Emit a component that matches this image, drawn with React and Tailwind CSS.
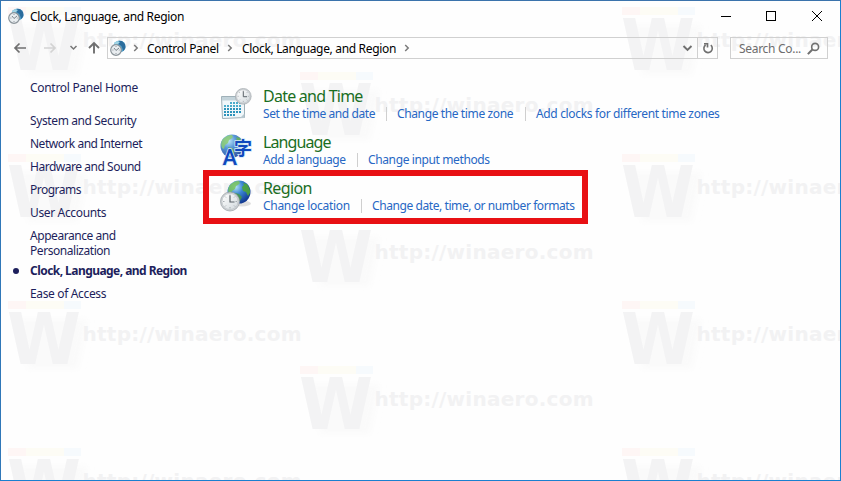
const sidebar = [
  { label: 'System and Security', className: 'tracking-[-0.38px]' },
  { label: 'Network and Internet', className: 'tracking-[-0.5px]' },
  { label: 'Hardware and Sound', className: 'tracking-[-0.47px]' },
  { label: 'Programs', className: 'tracking-[-0.5px]' },
  { label: 'User Accounts', className: 'tracking-[-0.35px]' },
  { label: 'Appearance and Personalization', className: 'w-[110px] tracking-[-0.45px]' },
  { label: 'Clock, Language, and Region', className: '-mt-[3px] font-bold tracking-[-0.55px]', active: true },
  { label: 'Ease of Access', className: 'tracking-[-0.35px]' },
];

const categories = [
  {
    title: 'Date and Time',
    titleClass: 'tracking-[-0.76px]',
    icon: DateTimeIcon,
    links: [
      { label: 'Set the time and date', className: 'w-[112px] tracking-[-0.42px]' },
      { label: 'Change the time zone', className: 'w-[117px] tracking-[-0.38px]' },
      { label: 'Add clocks for different time zones', className: 'w-[185px] tracking-[-0.34px]' },
    ],
  },
  {
    title: 'Language',
    titleClass: 'tracking-[-0.9px]',
    icon: LanguageIcon,
    links: [
      { label: 'Add a language', className: 'w-[83px] tracking-[-0.4px]' },
      { label: 'Change input methods', className: 'w-[123px] tracking-[-0.38px]' },
    ],
  },
  {
    title: 'Region',
    titleClass: 'tracking-[-0.6px]',
    icon: RegionIcon,
    marked: true,
    links: [
      { label: 'Change location', className: 'w-[87px] tracking-[-0.3px]' },
      { label: 'Change date, time, or number formats', className: 'w-[204px] tracking-[-0.42px]' },
    ],
  },
];

const stamps = [
  [8, 7], [8, 154], [8, 301], [8, 448],
  [300, 72], [300, 219], [300, 366],
  [622, 7], [622, 154], [622, 301], [622, 448],
];

function Watermark() {
  return (
    <svg
      className="absolute inset-0 pointer-events-none"
      width="839"
      height="479"
      viewBox="1 1 839 479"
      fontFamily="DejaVu Sans, sans-serif"
      fontWeight="bold"
    >
      <defs>
        <filter id="soft" x="-20%" y="-20%" width="150%" height="150%">
          <feGaussianBlur stdDeviation="3" />
        </filter>
      </defs>
      {stamps.map(([x, y]) => (
        <g key={`${x}-${y}`} transform={`translate(${x} ${y})`}>
          <path d="M8 18H80L70 68H20Z" fill="#fafafa" filter="url(#soft)" />
          {y !== 219 && (
            <>
              <rect width="18" height="8" fill="#fef6f5" />
              <rect x="18" width="38" height="8" fill="#fdfcf5" />
              <rect x="56" width="17" height="8" fill="#f6fafd" />
            </>
          )}
          <text x="-1" y="63" fontSize="71" fill="#f3f3f4" textLength="74" lengthAdjust="spacingAndGlyphs">W</text>
          <text x="74.500" y="39.500" fontSize="20" fill="#f2f2f3" textLength="219">http://winaero.com</text>
        </g>
      ))}
    </svg>
  );
}

function Globe({ id }) {
  return (
    <>
      <defs>
        <radialGradient id={id} cx="0.35" cy="0.28" r="0.8">
          <stop offset="0" stopColor="#b5e4f7" />
          <stop offset="0.4" stopColor="#3c86d2" />
          <stop offset="1" stopColor="#0c2f8a" />
        </radialGradient>
      </defs>
      <circle cx="12" cy="12" r="11.500" fill={`url(#${id})`} />
      <path d="M3 5C6 2 9 .8 12 1l1 2-2 2-2 1-1 3-3 2-1 4-2-1C.5 10 1 8 3 5Z" fill="#79c45c" opacity=".85" />
      <path d="M16 3l4 1c2 3 3.500 6 3 9l-2 3-2-4-3-1-1-4 2-2Z" fill="#4fa63a" opacity=".9" />
      <path d="M8 13l4 1 3 3-2 4-3 1-2-4Z" fill="#4a9c3e" opacity=".8" />
    </>
  );
}

function ClockFace({ id }) {
  return (
    <>
      <defs>
        <linearGradient id={id} x1="0" y1="0" x2="1" y2="1">
          <stop offset="0" stopColor="#ffffff" />
          <stop offset="1" stopColor="#d3dade" />
        </linearGradient>
      </defs>
      <circle cx="10" cy="10" r="9.500" fill="#cfd3d6" stroke="#979ea3" strokeWidth=".7" />
      <circle cx="10" cy="10" r="8" fill={`url(#${id})`} stroke="#b3b9bd" strokeWidth=".5" />
      <path d="M10 3v1.500M10 15.500V17M3 10h1.500M15.500 10H17M5 5l1 1M15 5l-1 1M5 15l1-1M15 15l-1-1" stroke="#8b9298" strokeWidth=".7" />
      <path d="M10 4V10.500H14.500" fill="none" stroke="#5a6268" strokeWidth="1.200" />
    </>
  );
}

function DateTimeIcon() {
  return (
    <svg className="shrink-0" width="32" height="32" viewBox="0 0 32 32">
      <path d="M1.500 8.500H24.500V29.500L2.500 30.500Z" fill="#f0f7fa" stroke="#9fb0b8" />
      <path d="M2 9H24V12.500H2Z" fill="#c3d3da" />
      {[14, 17, 20, 23, 26].map((y, row) =>
        [4, 7, 10, 13, 16, 19].map((x, col) =>
          (row === 0 && col < 2) || (row === 4 && col > 3) ? null : (
            <rect key={`${x}-${y}`} x={x} y={y} width="2" height="2" fill={row < 2 ? '#4aaccb' : '#2d93bb'} />
          )
        )
      )}
      <path d="M20 30l4.500-4.500V30Z" fill="#b8c8d0" />
      <g transform="translate(15 0) scale(.83)">
        <ClockFace id="clock-date" />
      </g>
    </svg>
  );
}

function LanguageIcon() {
  return (
    <svg className="shrink-0" width="32" height="32" viewBox="0 0 32 32">
      <g opacity=".85">
        <Globe id="globe-lang" />
      </g>
      <g fill="#0f48bd" stroke="#d5eaf8" strokeWidth="1.600" paintOrder="stroke">
        <text x="2.500" y="31" fontSize="22" fontFamily="Roboto, sans-serif" fontWeight="500">A</text>
        <text x="14" y="20.500" fontSize="18" fontFamily="Noto Sans CJK JP, sans-serif" fontWeight="bold">字</text>
      </g>
    </svg>
  );
}

function RegionIcon() {
  return (
    <svg className="shrink-0" width="32" height="32" viewBox="0 0 32 32">
      <ellipse cx="22" cy="23.500" rx="9" ry="3" fill="#000" opacity=".12" />
      <g transform="translate(7 0)">
        <Globe id="globe-region" />
      </g>
      <g transform="translate(0 11.500)">
        <ClockFace id="clock-region" />
      </g>
    </svg>
  );
}

function SmallIcon() {
  return (
    <svg className="shrink-0" width="16" height="16" viewBox="0 0 16 16">
      <circle cx="9.500" cy="6.500" r="6" fill="#4a9cc8" />
      <path d="M9 1l3 0 3 3 .5 4-2 3-2-5-3-2Z" fill="#2b6c9c" />
      <path d="M4 3l3-2 3 1-2 2-3 2Z" fill="#9fd3e4" />
      <circle cx="6" cy="10" r="5.300" fill="#e9edf0" stroke="#8b949a" strokeWidth="1.200" />
      <path d="M4 8l2 2.500L9 8M6 6v.8M6 13v.8M2.500 10h.8M8.800 10h.8" fill="none" stroke="#7b858c" />
    </svg>
  );
}

function Chevron() {
  return (
    <svg className="shrink-0" width="6" height="8" viewBox="0 0 6 8">
      <path d="M1.200 1L4.200 4L1.200 7" fill="none" stroke="#7a7a7a" strokeWidth="1.500" />
    </svg>
  );
}

function TitleBar() {
  return (
    <div className="flex h-[30px] items-center pl-[7px] pr-[17px]">
      <SmallIcon />
      <span className="ml-[6px] text-black tracking-[-0.33px]">Clock, Language, and Region</span>
      <svg className="ml-auto" width="104" height="12" viewBox="0 0 104 12" fill="none" stroke="#000">
        <path d="M2 6.500H12" />
        <rect x="47.500" y="1.500" width="9" height="9" />
        <path d="M93 1L103 11M103 1L93 11" />
      </svg>
    </div>
  );
}

function AddressBar() {
  return (
    <div className="mt-[6px] flex h-[22px] items-center pl-[12px] pr-[12px]">
      <svg className="shrink-0" width="94" height="22" viewBox="0 0 94 22" fill="none">
        <path d="M13 11H2M6.500 6.500L2 11L6.500 15.500" stroke="#707070" strokeWidth="1.700" />
        <path d="M31 11H42M37.500 6.500L42 11L37.500 15.500" stroke="#d3d3d3" strokeWidth="1.700" />
        <path d="M57.500 9L60.500 12L63.500 9" stroke="#777" strokeWidth="1.500" />
        <path d="M81 16.500V6M76 11L81 6L86 11" stroke="#707070" strokeWidth="1.900" />
      </svg>
      <div className="flex h-[22px] w-[611px] items-center border border-[#d0d0d0] pl-[2px]">
        <SmallIcon />
        <span className="ml-[7px] flex"><Chevron /></span>
        <span className="ml-[8px] w-[72px] whitespace-nowrap text-black tracking-[-0.33px]">Control Panel</span>
        <span className="ml-[8px] flex"><Chevron /></span>
        <span className="ml-[9px] w-[154px] whitespace-nowrap text-black tracking-[-0.33px]">Clock, Language, and Region</span>
        <span className="ml-[8px] flex"><Chevron /></span>
        <svg className="ml-auto" width="11" height="8" viewBox="0 0 11 8">
          <path d="M1.500 2L5.500 6L9.500 2" fill="none" stroke="#707070" strokeWidth="1.900" />
        </svg>
        <div className="ml-[4px] flex h-full w-[20px] items-center justify-center border-l border-[#d0d0d0]">
          <svg width="12" height="12" viewBox="0 0 12 12" fill="none" stroke="#707070" strokeWidth="1.600">
            <path d="M8.800 3.200A4.200 4.200 0 1 1 3.600 3M2 1.800H5.500V5.500" />
          </svg>
        </div>
      </div>
      <div className="ml-[12px] flex h-[22px] w-[98px] items-center border border-[#d0d0d0] pl-[8px]">
        <span className="w-[62px] whitespace-nowrap text-[#6d6d6d] tracking-[-0.3px]">Search Co...</span>
        <svg className="ml-[6px]" width="13" height="13" viewBox="0 0 12 12" fill="none" stroke="#707070">
          <circle cx="7.500" cy="4.500" r="3.200" strokeWidth="1.500" />
          <path d="M5 7L.8 11.200" strokeWidth="1.900" />
        </svg>
      </div>
    </div>
  );
}

function Category({ title, titleClass, icon: Icon, links, marked }) {
  return (
    <section className="relative flex h-[46px]">
      {marked && <div className="absolute -left-[17px] -top-[10px] h-[54px] w-[385px] border-[6px] border-[#e81014]" />}
      <Icon />
      <div className="-mt-px ml-[11px]">
        <h2 className={`h-[18px] text-[16px] leading-[18px] text-[#1b6e1f] ${titleClass}`}>{title}</h2>
        <div className="flex h-[17px] items-center text-[#2767c4]">
          {links.map(({ label, className }, i) => (
            <div key={label} className="flex items-center">
              {i > 0 && <span className="ml-[11px] mr-[10px] h-[14px] w-px bg-[#cfcfcf]" />}
              <a className={`${className} whitespace-nowrap`}>{label}</a>
            </div>
          ))}
        </div>
      </div>
    </section>
  );
}

export default function App() {
  return (
    <div className="relative h-[481px] w-[841px] overflow-hidden border border-t-[#3b73ac] border-l-[#2f77b8] border-r-[#1a80d0] border-b-[#1a80d0] bg-[#fefefe] font-['Noto_Sans',sans-serif] text-[12px] leading-[15px]">
      <Watermark />
      <div className="relative">
        <TitleBar />
        <AddressBar />
        <main className="flex">
          <nav className="mt-[21px] w-[219px] pl-[29px] text-[#1d1f5c]">
            <p className="mb-[18px] tracking-[-0.3px]">Control Panel Home</p>
            <ul className="flex flex-col gap-[8px]">
              {sidebar.map(({ label, className, active }) => (
                <li key={label} className={`relative ${className}`}>
                  {active && <span className="absolute -left-[17px] top-[5px] size-[6px] rounded-full bg-[#1d1f5c]" />}
                  {label}
                </li>
              ))}
            </ul>
          </nav>
          <div className="mt-[29px]">
            {categories.map((category) => (
              <Category key={category.title} {...category} />
            ))}
          </div>
        </main>
      </div>
    </div>
  );
}
